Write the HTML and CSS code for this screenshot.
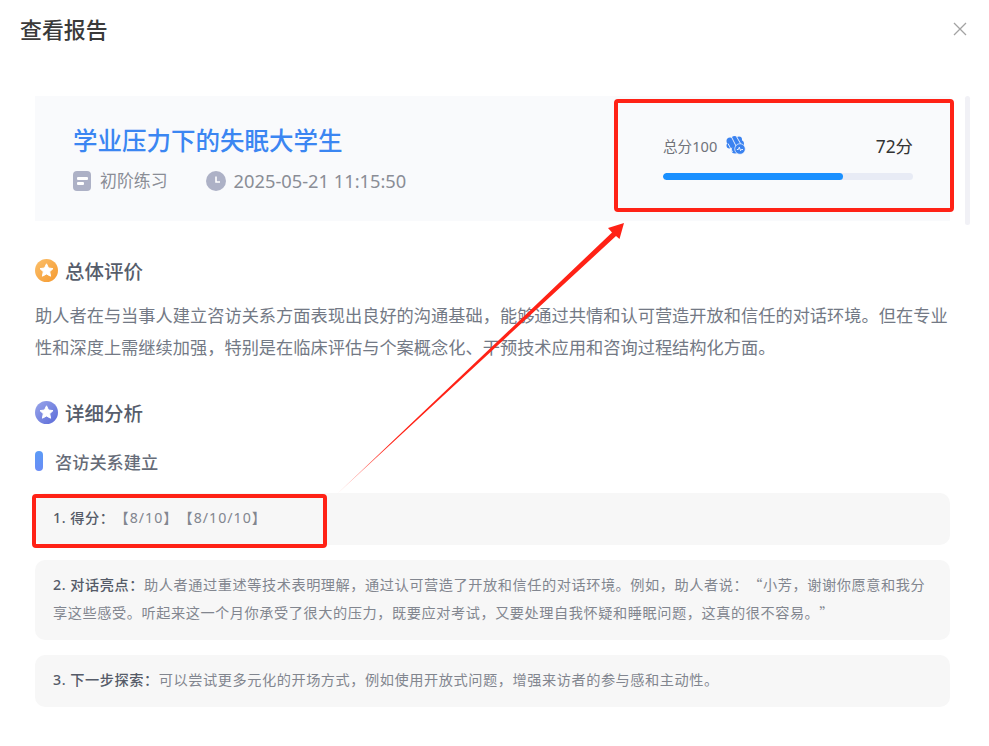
FILE: index.html
```html
<!DOCTYPE html>
<html lang="zh-CN">
<head>
<meta charset="utf-8">
<title>查看报告</title>
<link rel="stylesheet" href="styles.css">
</head>
<body>
<div class="modal">
  <header class="modal-head">
    <h1 class="modal-title">查看报告</h1>
    <svg class="close" width="14" height="14" viewBox="0 0 14 14"><path d="M1 1L13 13M13 1L1 13" stroke="#a3a3a3" stroke-width="1.3" fill="none"/></svg>
  </header>
  <main class="modal-body">
    <section class="summary">
      <div class="summary-left">
        <h2 class="case-title">学业压力下的失眠大学生</h2>
        <div class="meta">
          <span class="meta-item meta-level">
            <svg width="18" height="20" viewBox="0 0 18 20"><rect width="18" height="20" rx="4" fill="#adb1c6"/><rect x="4" y="6" width="11" height="3" rx="1" fill="#fff"/><rect x="4" y="11" width="7" height="3" rx="1" fill="#fff"/></svg>
            初阶练习
          </span>
          <span class="meta-item meta-date">
            <svg width="20" height="20" viewBox="0 0 20 20"><circle cx="10" cy="10" r="10" fill="#adb1c6"/><path d="M10 5.500V11H14" stroke="#fff" stroke-width="1.600" fill="none"/></svg>
            2025-05-21 11:15:50
          </span>
        </div>
      </div>
      <div class="score">
        <div class="score-row">
          <span class="score-label">总分100
            <svg class="score-icon" width="20" height="19" viewBox="0 0 20 19"><g fill="#3b82f0"><circle cx="4" cy="5" r="3.500"/><circle cx="8.500" cy="3" r="3"/><circle cx="13" cy="3.500" r="3"/><circle cx="3.500" cy="9.500" r="3"/><circle cx="8" cy="8" r="4"/><circle cx="14" cy="8" r="4"/><circle cx="9" cy="14" r="3.500"/></g><path d="M5.500 1L11 12M10.500 .5L14.500 7.500M2 7.500L6.500 16" stroke="#f9fafc" stroke-width=".9" fill="none"/><circle cx="14" cy="13" r="5.300" fill="#3b82f0" stroke="#f9fafc" stroke-width=".7"/><path d="M10.900 13.500H12.300L13.300 11.200L14.600 14.700L15.400 13.500H17" stroke="#fff" stroke-width=".9" fill="none"/></svg>
          </span>
          <span class="score-value">72分</span>
        </div>
        <div class="progress"><div class="progress-fill" style="width:72%"></div></div>
      </div>
    </section>

    <h3 class="section-head">
      <svg width="23" height="23" viewBox="0 0 23 23"><defs><linearGradient id="orange" x1="0" y1="0" x2="1" y2="1"><stop offset="0" stop-color="#fbbf6a"/><stop offset="1" stop-color="#f59a30"/></linearGradient></defs><circle cx="11.500" cy="11.500" r="11.500" fill="url(#orange)"/><path d="M11.500 4.800L13.500 9L18 9.600L14.700 12.700L15.600 17.200L11.500 15L7.400 17.200L8.300 12.700L5 9.600L9.500 9Z" fill="#fff" stroke="#fff" stroke-linejoin="round"/></svg>
      总体评价
    </h3>
    <p class="overall">助人者在与当事人建立咨访关系方面表现出良好的沟通基础，能够通过共情和认可营造开放和信任的对话环境。但在专业性和深度上需继续加强，特别是在临床评估与个案概念化、干预技术应用和咨询过程结构化方面。</p>

    <h3 class="section-head section-detail">
      <svg width="23" height="23" viewBox="0 0 23 23"><defs><linearGradient id="violet" x1="0" y1="0" x2="1" y2="1"><stop offset="0" stop-color="#9aa6ea"/><stop offset="1" stop-color="#5a6ad8"/></linearGradient></defs><circle cx="11.500" cy="11.500" r="11.500" fill="url(#violet)"/><path d="M11.500 4.800L13.500 9L18 9.600L14.700 12.700L15.600 17.200L11.500 15L7.400 17.200L8.300 12.700L5 9.600L9.500 9Z" fill="#fff" stroke="#fff" stroke-linejoin="round"/></svg>
      详细分析
    </h3>
    <h4 class="sub-head"><span class="sub-bar"></span>咨访关系建立</h4>
    <div class="items">
      <div class="item"><b>1. 得分：</b><span class="tags">【8/10】【8/10/10】</span></div>
      <div class="item"><b>2. 对话亮点：</b>助人者通过重述等技术表明理解，通过认可营造了开放和信任的对话环境。例如，助人者说：<span class="cjk">“</span>小芳，谢谢你愿意和我分享这些感受。听起来这一个月你承受了很大的压力，既要应对考试，又要处理自我怀疑和睡眠问题，这真的很不容易。<span class="cjk">”</span></div>
      <div class="item"><b>3. 下一步探索：</b>可以尝试更多元化的开场方式，例如使用开放式问题，增强来访者的参与感和主动性。</div>
    </div>
  </main>
  <div class="scrollbar"></div>
</div>
<svg class="annotations" width="989" height="746" viewBox="0 0 989 746">
  <defs><linearGradient id="fade" gradientUnits="userSpaceOnUse" x1="337" y1="495" x2="390" y2="444"><stop offset="0" stop-color="#ff2216" stop-opacity=".35"/><stop offset="1" stop-color="#ff2216"/></linearGradient></defs>
  <rect x="616" y="101" width="336" height="109" rx="2" fill="none" stroke="#ff2216" stroke-width="4"/>
  <rect x="34" y="496" width="291" height="50" rx="2" fill="none" stroke="#ff2216" stroke-width="4"/>
  <polygon points="337,494 612,232.500 608,228 624,223 619.500,239 616,236" fill="url(#fade)"/>
</svg>
</body>
</html>
```
FILE: styles.css
```css
* { box-sizing: border-box; }
html, body { margin: 0; height: 100%; }
body {
  width: 989px;
  height: 746px;
  overflow: hidden;
  background: #fff;
  font-family: "Noto Sans", "Noto Sans CJK SC", sans-serif;
  color: #374151;
  text-spacing-trim: space-all;
}
h1, h2, h3, h4, p { margin: 0; font-weight: 500; }
.cjk { font-family: "Noto Sans CJK SC", sans-serif; line-height: 1; }
.tags { letter-spacing: 1px; }
.modal { position: relative; height: 746px; }
.modal-head {
  height: 96px;
  padding: 14px 22px 0 20px;
  display: flex;
  justify-content: space-between;
  align-items: flex-start;
}
.modal-title { font-size: 21.900px; line-height: 32px; color: #3a3a3a; }
.close { margin-top: 8px; }
.modal-body { padding: 0 39px 0 35px; }
.summary {
  height: 125px;
  background: #f9fafc;
  padding: 0 37px 0 38px;
  display: flex;
  justify-content: space-between;
  align-items: center;
}
.case-title { font-size: 24.500px; line-height: 34px; color: #3b86f2; }
.meta { display: flex; gap: 38px; margin-top: 11px; color: #8a8d96; font-size: 16.900px; line-height: 24px; }
.meta-item { display: flex; align-items: center; gap: 9px; }
.meta-date { font-size: 18.300px; gap: 8px; }
.score { width: 250px; margin-top: -4px; }
.score-row { display: flex; justify-content: space-between; align-items: center; height: 24px; margin-bottom: 16px; }
.score-label { display: flex; align-items: center; gap: 9px; font-size: 14.600px; color: #70737a; }
.score-value { font-size: 17.400px; font-weight: 400; color: #333; }
.progress { height: 7px; border-radius: 4px; background: #e8ebf5; overflow: hidden; }
.progress-fill { height: 100%; border-radius: 4px; background: #1a90ff; }
.section-head {
  display: flex;
  align-items: center;
  gap: 7px;
  margin-top: 34px;
  height: 30px;
  font-size: 19.500px;
  color: #565d6b;
}
.overall { margin-top: 15px; font-size: 17.230px; line-height: 32px; color: #737985; font-weight: 400; }
.section-detail { margin-top: 33px; }
.sub-head {
  display: flex;
  align-items: center;
  gap: 12px;
  margin-top: 19px;
  height: 30px;
  font-size: 17.200px;
  color: #666c78;
}
.sub-bar { width: 8px; height: 20px; border-radius: 4px; background: linear-gradient(#5b9bf6, #6a8cf5); }
.items { margin-top: 17px; display: flex; flex-direction: column; gap: 15px; }
.item {
  padding: 11px 18px 13px;
  background: #f7f7f7;
  border-radius: 10px;
  font-size: 14.200px;
  letter-spacing: .55px;
  line-height: 28px;
  color: #82868f;
}
.item b { font-weight: 500; color: #555b68; }
.scrollbar {
  position: absolute;
  left: 965px;
  top: 96px;
  width: 5px;
  height: 129px;
  border-radius: 3px;
  background: #f1f1f6;
}
.annotations { position: absolute; left: 0; top: 0; pointer-events: none; }
```
